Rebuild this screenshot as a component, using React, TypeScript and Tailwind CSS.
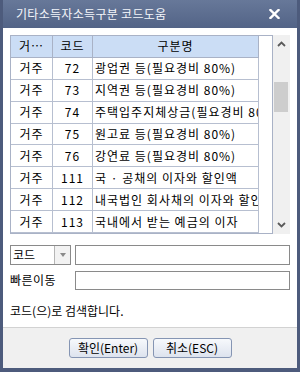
import React from 'react';

const rows = [
  { type: '거주', code: '72', name: '광업권 등(필요경비 80%)' },
  { type: '거주', code: '73', name: '지역권 등(필요경비 80%)' },
  { type: '거주', code: '74', name: '주택입주지체상금(필요경비 80%)' },
  { type: '거주', code: '75', name: '원고료 등(필요경비 80%)' },
  { type: '거주', code: '76', name: '강연료 등(필요경비 80%)' },
  { type: '거주', code: '111', name: '국 · 공채의 이자와 할인액' },
  { type: '거주', code: '112', name: '내국법인 회사채의 이자와 할인액' },
  { type: '거주', code: '113', name: '국내에서 받는 예금의 이자' },
];

const font = { fontFamily: "'Noto Sans CJK KR', 'Noto Sans', sans-serif" };

export default function App() {
  return (
    <div
      className="w-[300px] h-[372px] flex flex-col bg-[#4d5b7c] px-[3px] pb-[4px] text-[12px] leading-none text-black"
      style={font}
    >
      {/* Title bar */}
      <div className="h-[28px] shrink-0 flex items-center justify-between pl-[13px] pr-[17px] bg-gradient-to-b from-[#677899] to-[#536487]">
        <span className="text-[#f4f6fb] text-[12px] tracking-[0.3px]">기타소득자소득구분 코드도움</span>
        <svg width="11" height="10" viewBox="0 0 11 10">
          <path d="M1.5 1 L9.5 9 M9.5 1 L1.5 9" stroke="#ffffff" strokeWidth="2.4" strokeLinecap="square" />
        </svg>
      </div>

      {/* Body */}
      <div className="flex-1 bg-white flex flex-col pt-[7px] px-[7px]">
        <div className="flex h-[199px]">
          {/* Grid */}
          <div className="w-[263px] border border-[#a9b2c6] flex">
            <div className="w-[248px] flex flex-col tracking-[1px]">
              <div className="h-[22px] flex bg-[#cbddf5] border-b border-[#a9b2c6]">
                <div className="w-[42px] border-r border-[#a9b2c6] flex items-center justify-center">거…</div>
                <div className="w-[40px] border-r border-[#a9b2c6] flex items-center justify-center">코드</div>
                <div className="w-[166px] border-r border-[#a9b2c6] flex items-center justify-center">구분명</div>
              </div>
              {rows.map((r) => (
                <div key={r.code} className="h-[22px] flex border-b border-[#b7bfd0]">
                  <div className="w-[42px] border-r border-[#b7bfd0] flex items-center justify-center">{r.type}</div>
                  <div className="w-[40px] border-r border-[#b7bfd0] flex items-center justify-center">{r.code}</div>
                  <div className="w-[166px] border-r border-[#b7bfd0] flex items-center pl-[2px] overflow-hidden whitespace-nowrap">
                    {r.name}
                  </div>
                </div>
              ))}
            </div>
            <div className="flex-1 bg-white" />
          </div>
          {/* Scrollbar */}
          <div className="w-[17px] bg-[#f0f0f0] flex flex-col items-center justify-between py-[6px] relative">
            <svg width="9" height="6" viewBox="0 0 9 6">
              <path d="M1 5 L4.5 1.5 L8 5" stroke="#5a5a5a" strokeWidth="1.8" fill="none" />
            </svg>
            <div className="absolute left-[1px] top-[47px] w-[14px] h-[30px] bg-[#cdcdcd]" />
            <svg width="9" height="6" viewBox="0 0 9 6">
              <path d="M1 1 L4.5 4.5 L8 1" stroke="#5a5a5a" strokeWidth="1.8" fill="none" />
            </svg>
          </div>
        </div>

        {/* Search row */}
        <div className="flex items-center mt-[11px] h-[20px]">
          <div className="w-[61px] h-[20px] border border-[#8a8a8a] flex">
            <div className="flex-1 flex items-center pl-[2px]">코드</div>
            <div className="w-[16px] border-l border-[#b5b5b5] bg-[#f2f2f2] flex items-center justify-center">
              <svg width="6" height="4" viewBox="0 0 6 4">
                <path d="M0 0 L6 0 L3 4 Z" fill="#8a8a8a" />
              </svg>
            </div>
          </div>
          <div className="ml-[4px] flex-1 h-[20px] border border-[#8a8a8a] bg-white" />
        </div>

        <div className="flex items-center mt-[5px] h-[20px]">
          <div className="w-[65px] tracking-[0.5px]">빠른이동</div>
          <div className="flex-1 h-[19px] border border-[#8a8a8a] bg-white" />
        </div>

        <div className="mt-[15px]">코드(으)로 검색합니다.</div>
      </div>

      {/* Footer */}
      <div className="h-[41px] shrink-0 bg-[#f0f0f0] border-t border-[#d2d2d2] flex justify-center gap-[5px] pt-[10px]">
        <button className="w-[79px] h-[20px] border border-[#8595b3] rounded-[3px] bg-gradient-to-b from-[#f7f9fc] to-[#dde3ee] flex items-center justify-center">
          확인(Enter)
        </button>
        <button className="w-[79px] h-[20px] border border-[#8595b3] rounded-[3px] bg-gradient-to-b from-[#f7f9fc] to-[#dde3ee] flex items-center justify-center">
          취소(ESC)
        </button>
      </div>
    </div>
  );
}
